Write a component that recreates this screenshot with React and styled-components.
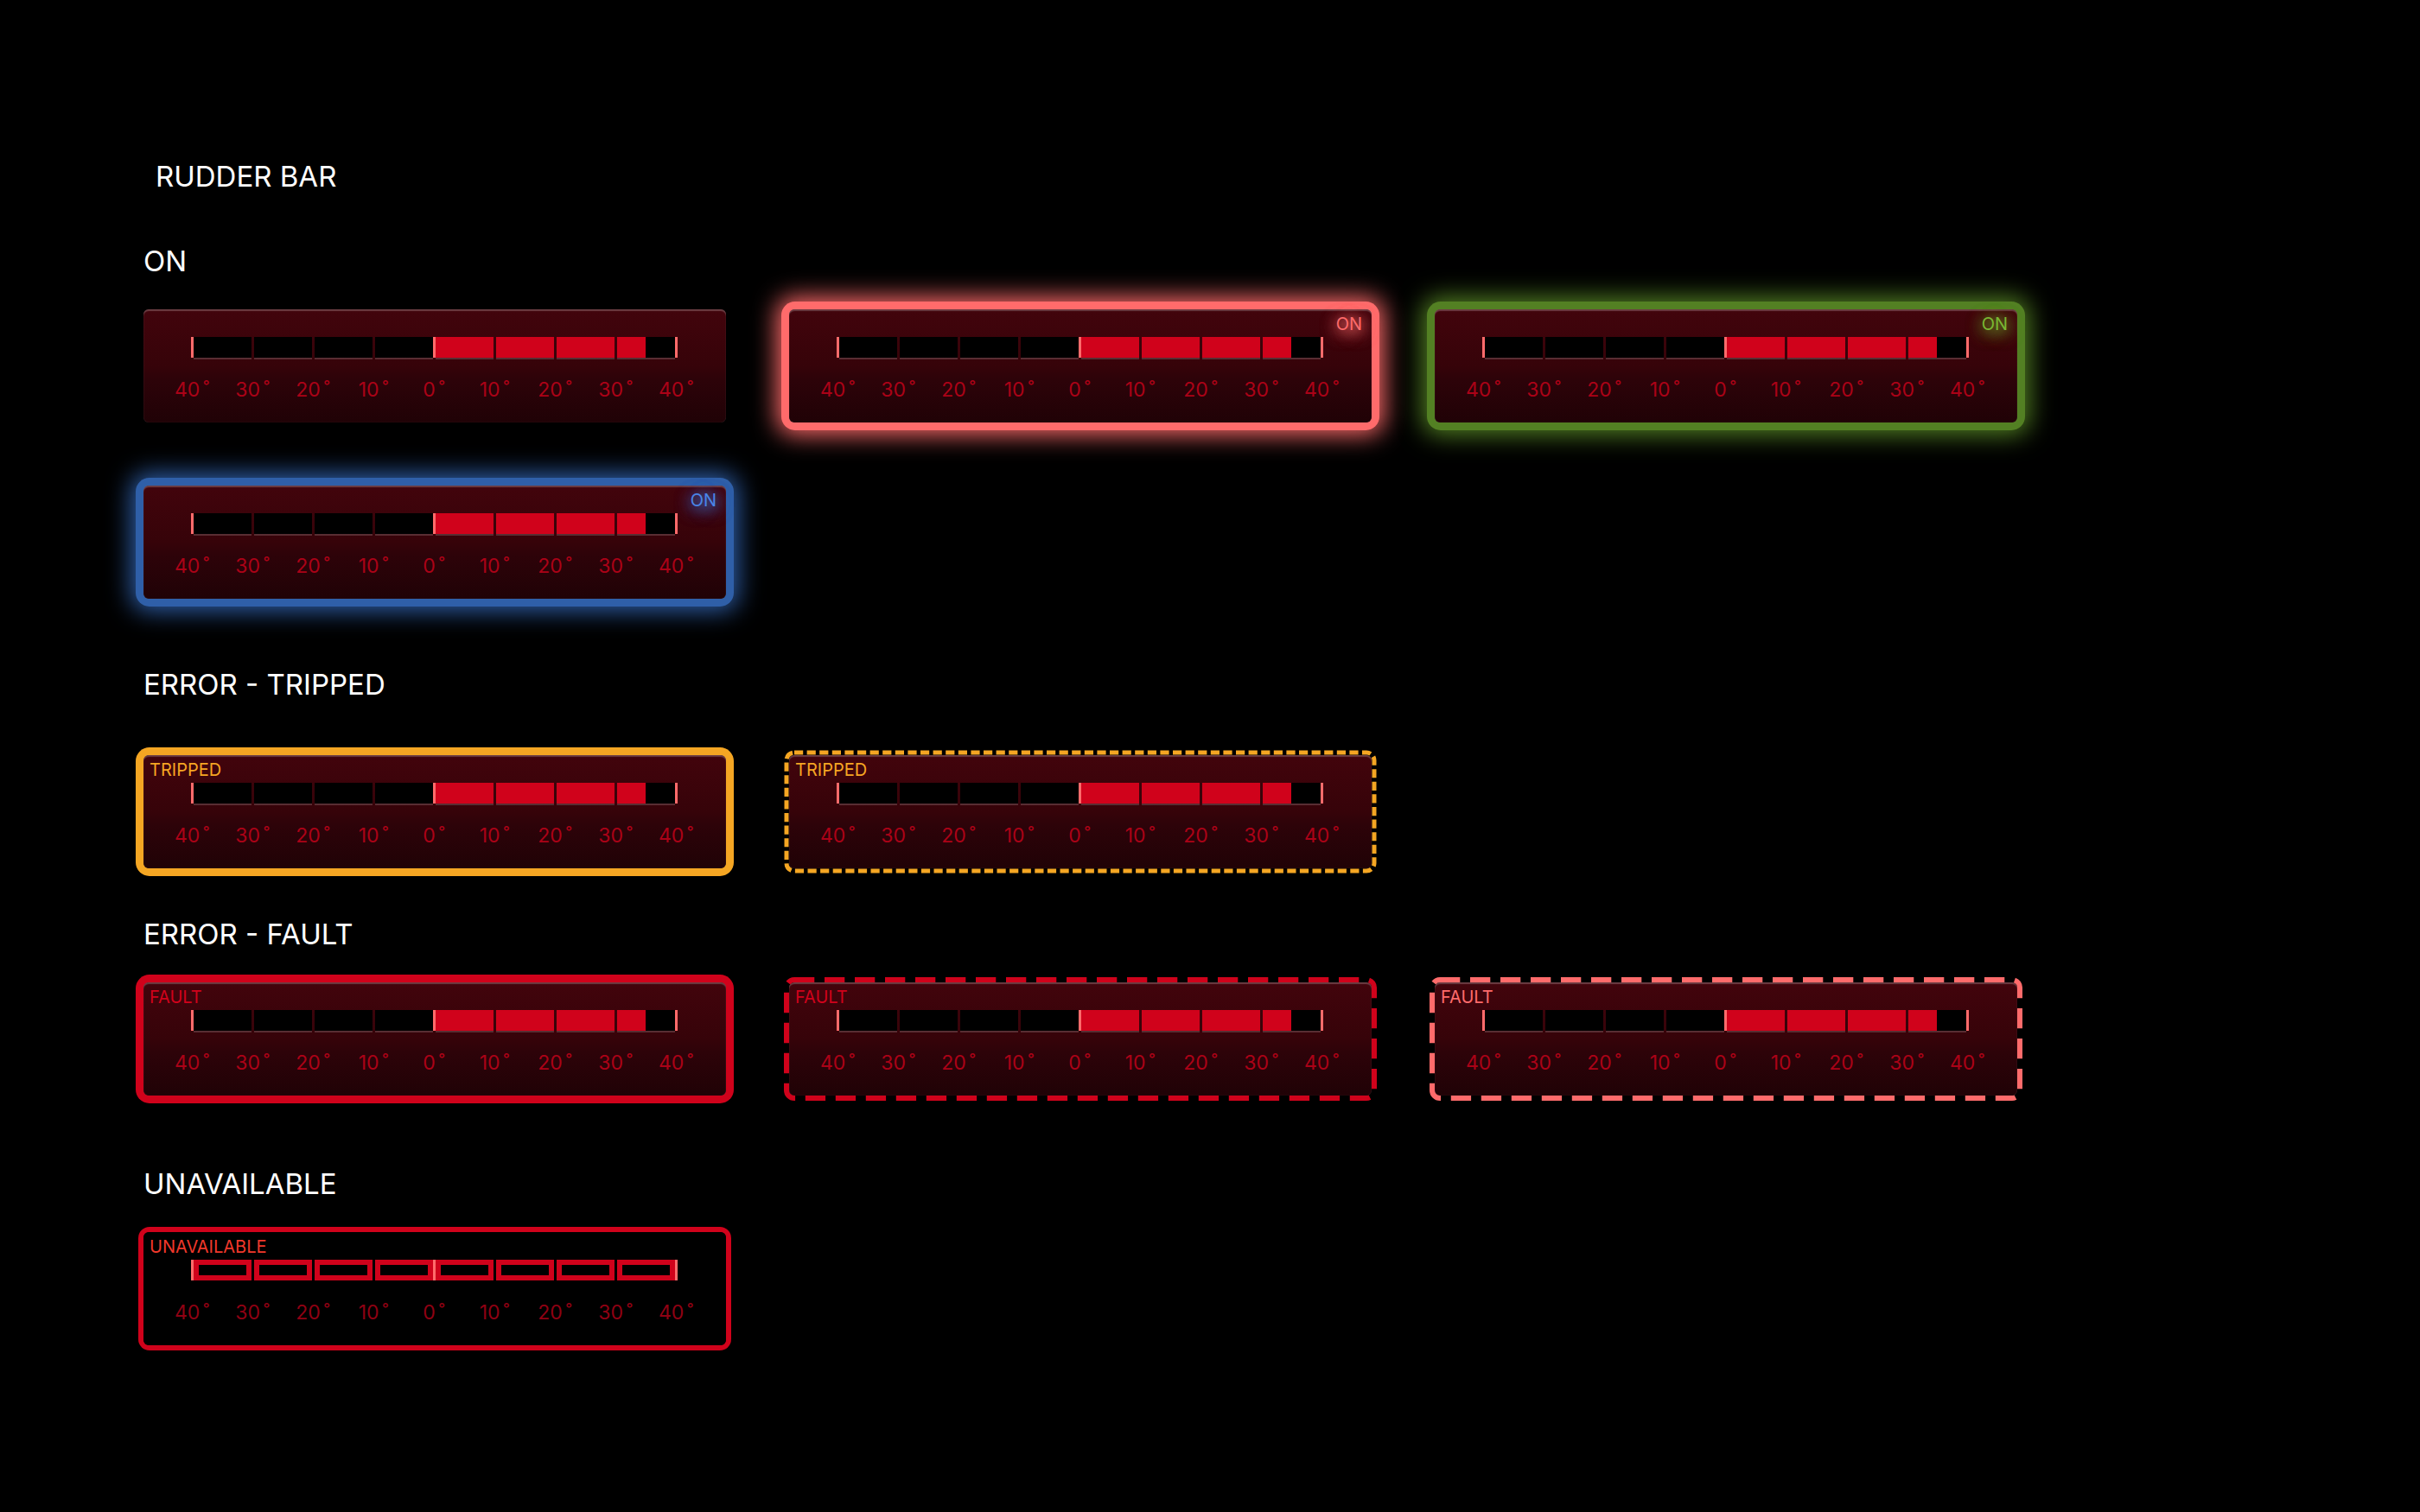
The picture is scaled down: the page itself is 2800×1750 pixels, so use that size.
import React from "react";
import styled, { createGlobalStyle, css } from "styled-components";

const GlobalStyle = createGlobalStyle`
  * { box-sizing: border-box; }
  body {
    margin: 0;
    background: #000;
    color: #fff;
    font-family: Inter, "Liberation Sans", sans-serif;
  }
`;

const CARD_WIDTH = 674;
const CARD_HEIGHT = 131;

const Page = styled.main`
  min-height: 100vh;
  padding: 184px 80px 184px 166px;
`;

const Title = styled.h1`
  margin: 0 0 58px;
  padding-left: 14px;
  font-size: 33px;
  line-height: 40px;
  font-weight: 400;
`;

const Section = styled.section`
  margin-bottom: ${({ $after }) => $after}px;
`;

const SectionTitle = styled.h2`
  margin: 0 0 ${({ $after }) => $after}px;
  font-size: 33px;
  line-height: 40px;
  font-weight: 400;
`;

const CardList = styled.div`
  display: flex;
  flex-wrap: wrap;
  gap: 73px;
`;

const ring = {
  glow: css`
    box-shadow: 0 0 0 9px ${({ $color }) => $color}, 0 0 28px 14px ${({ $color }) => $color};
  `,
  thick: css`
    box-shadow: 0 0 0 9px ${({ $color }) => $color};
  `,
  thin: css`
    box-shadow: 0 0 0 6px ${({ $color }) => $color};
  `,
};

const Card = styled.article`
  position: relative;
  width: ${CARD_WIDTH}px;
  max-width: 100%;
  height: ${CARD_HEIGHT}px;
  border-radius: 7px;
  ${({ $ring }) => ring[$ring]}
`;

const Face = styled.div`
  display: flex;
  flex-direction: column;
  align-items: center;
  height: 100%;
  padding: 32px 2px 0 0;
  border-radius: 6px;
  background: ${({ $off }) =>
    $off ? "#000" : "linear-gradient(180deg, #42040c 0%, #360309 50%, #2d0309 62%, #200206 100%)"};
  box-shadow: ${({ $off }) =>
    $off ? "none" : "inset 0 2px 1px rgba(255, 255, 255, 0.22), inset 0 0 1px rgba(255, 255, 255, 0.2)"};
`;

const DashedRing = styled.svg`
  position: absolute;
  top: -6px;
  left: -6px;
  overflow: visible;
  pointer-events: none;
`;

const Status = styled.span`
  position: absolute;
  top: 5px;
  ${({ $side }) => ($side === "right" ? "right: 11px;" : "left: 7px;")}
  color: ${({ $color }) => $color};
  font-size: 20px;
  line-height: 24px;
  text-shadow: ${({ $halo }) => ($halo ? `0 0 16px ${$halo}, 0 4px 20px ${$halo}, 0 4px 20px ${$halo}` : "none")};
`;

const Track = styled.div`
  position: relative;
  display: grid;
  grid-template-columns: repeat(8, 67px);
  column-gap: 3px;
  height: 24px;
`;

const Segment = styled.div`
  background: #000;
  ${({ $off }) =>
    $off
      ? "border: 6px solid #d0021b;"
      : "box-shadow: 0 2px 0 rgba(255, 255, 255, 0.17);"}
`;

const Fill = styled.div`
  height: 100%;
  background: #d0021b;
`;

const Tick = styled.i`
  position: absolute;
  top: 0;
  bottom: 0;
  left: ${({ $at }) => $at}px;
  width: 3px;
  background: #ff6b6b;
`;

const Scale = styled.div`
  display: grid;
  grid-template-columns: repeat(9, 70px);
  margin-top: 23px;
  color: ${({ $off }) => ($off ? "#8f0113" : "#ab0217")};
  font-size: 23px;
  line-height: 28px;
  text-align: center;
`;

const Degree = styled.span`
  margin-left: 4px;
`;

const DEGREES = [40, 30, 20, 10, 0, 10, 20, 30, 40];
const SEGMENTS = [-40, -30, -20, -10, 0, 10, 20, 30];

const dashes = {
  short: { width: 5, inset: 3, pattern: "10.2 4.4" },
  long: { width: 6, inset: 3, pattern: "23.3 11.7" },
};

function Dashes({ kind, color }) {
  const d = dashes[kind];
  return (
    <DashedRing width={CARD_WIDTH + 12} height={CARD_HEIGHT + 12} aria-hidden="true">
      <rect
        x={d.inset}
        y={d.inset}
        width={CARD_WIDTH + 12 - 2 * d.inset}
        height={CARD_HEIGHT + 12 - 2 * d.inset}
        rx="9"
        fill="none"
        stroke={color}
        strokeWidth={d.width}
        strokeDasharray={d.pattern}
      />
    </DashedRing>
  );
}

function RudderBar({ value = 35, ring: kind, dashed, color, status, statusColor, side = "left", halo, off }) {
  return (
    <Card $ring={kind} $color={color}>
      {dashed && <Dashes kind={dashed} color={color} />}
      <Face $off={off}>
        <Track role="meter" aria-label="Rudder angle" aria-valuemin={-40} aria-valuemax={40} aria-valuenow={off ? 0 : value}>
          {SEGMENTS.map((start) => {
            const share = start < 0 ? 0 : Math.max(0, Math.min(10, value - start)) / 10;
            return (
              <Segment key={start} $off={off}>
                {!off && share > 0 && <Fill style={{ width: `${share * 100}%` }} />}
              </Segment>
            );
          })}
          <Tick $at={-3} />
          <Tick $at={277} />
          <Tick $at={557} />
        </Track>
        <Scale $off={off}>
          {DEGREES.map((degree, i) => (
            <span key={i}>
              {degree}
              <Degree>˚</Degree>
            </span>
          ))}
        </Scale>
      </Face>
      {status && (
        <Status $side={side} $color={statusColor || color} $halo={halo}>
          {status}
        </Status>
      )}
    </Card>
  );
}

export default function App() {
  return (
    <>
      <GlobalStyle />
      <Page>
        <Title>RUDDER BAR</Title>

        <Section $after={79}>
          <SectionTitle $after={36}>ON</SectionTitle>
          <CardList>
            <RudderBar />
            <RudderBar ring="glow" color="#ff6b6b" status="ON" side="right" halo="#ff6b6b" />
            <RudderBar ring="glow" color="#538023" status="ON" statusColor="#7ab833" side="right" halo="#6aa02c" />
            <RudderBar ring="glow" color="#2f5fa8" status="ON" statusColor="#4a86e8" side="right" halo="#3a70d0" />
          </CardList>
        </Section>

        <Section $after={56}>
          <SectionTitle $after={62}>ERROR - TRIPPED</SectionTitle>
          <CardList>
            <RudderBar ring="thick" color="#f5a623" status="TRIPPED" />
            <RudderBar dashed="short" color="#f5a623" status="TRIPPED" />
          </CardList>
        </Section>

        <Section $after={82}>
          <SectionTitle $after={36}>ERROR - FAULT</SectionTitle>
          <CardList>
            <RudderBar ring="thick" color="#d0021b" status="FAULT" />
            <RudderBar dashed="long" color="#d0021b" status="FAULT" />
            <RudderBar dashed="long" color="#ff6b6b" status="FAULT" />
          </CardList>
        </Section>

        <Section $after={0}>
          <SectionTitle $after={36}>UNAVAILABLE</SectionTitle>
          <CardList>
            <RudderBar off ring="thin" color="#d0021b" status="UNAVAILABLE" statusColor="#f0382b" />
          </CardList>
        </Section>
      </Page>
    </>
  );
}
